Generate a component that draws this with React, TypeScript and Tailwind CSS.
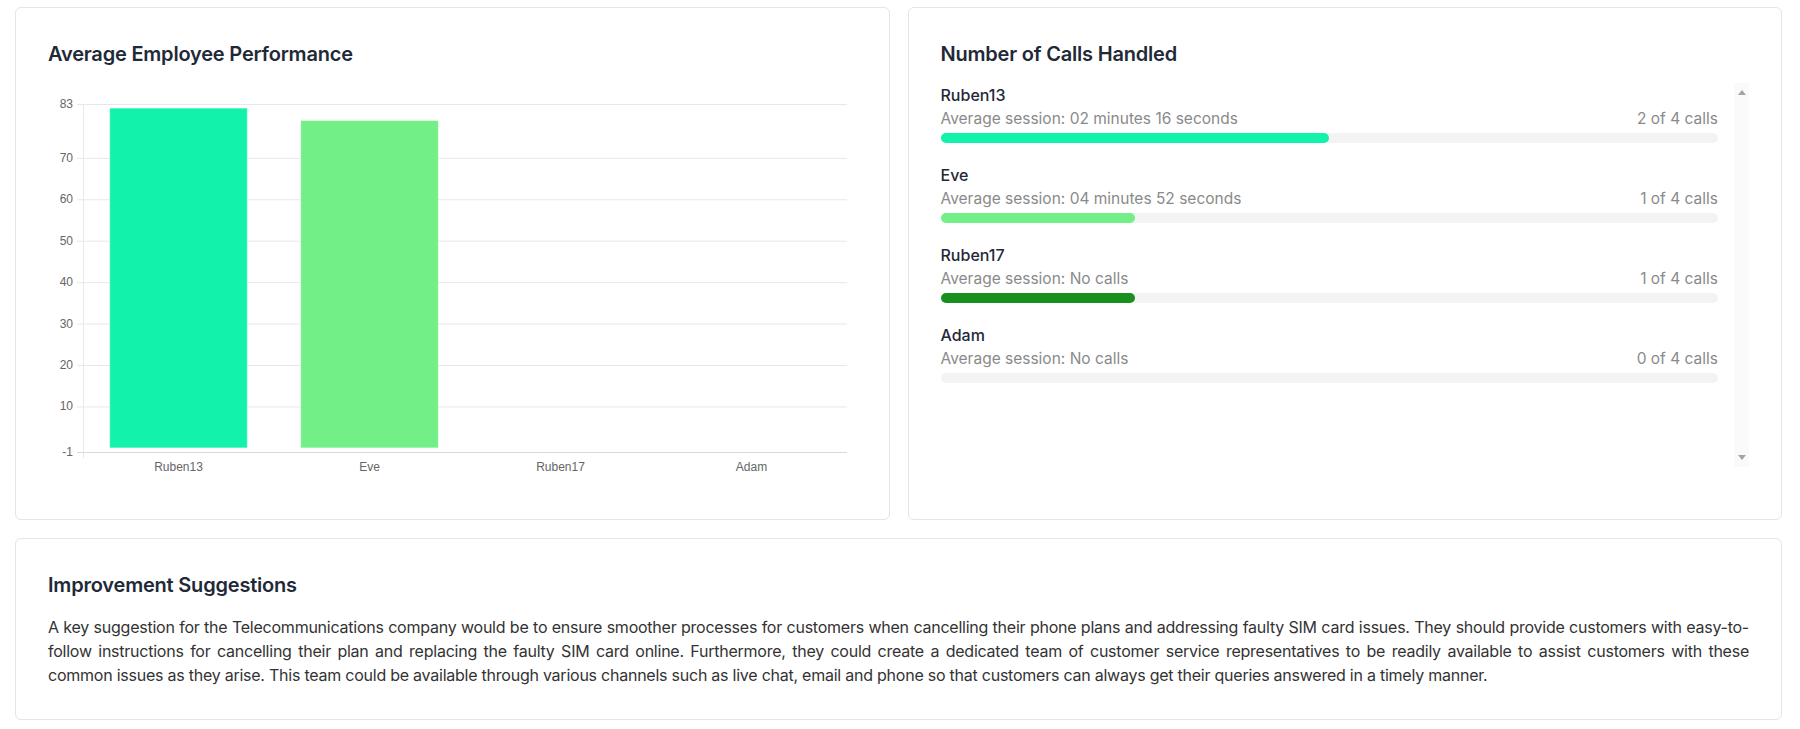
import React from 'react';

const FONT = { fontFamily: 'Inter, "Noto Sans", sans-serif' };

const employees = [
  { name: 'Ruben13', score: 82, session: '02 minutes 16 seconds', calls: 2, color: '#13f2aa' },
  { name: 'Eve', score: 79, session: '04 minutes 52 seconds', calls: 1, color: '#72ef87' },
  { name: 'Ruben17', score: 0, session: 'No calls', calls: 1, color: '#198f1d' },
  { name: 'Adam', score: 0, session: 'No calls', calls: 0, color: '#198f1d' },
];
const TOTAL = 4;

// nbsp keeps "common issues" together so the lines break as in the design
const SUGGESTION =
  'A key suggestion for the Telecommunications company would be to ensure smoother processes for customers when cancelling their phone plans and addressing faulty SIM card issues. They should provide customers with easy-to-follow instructions for cancelling their plan and replacing the faulty SIM card online. Furthermore, they could create a dedicated team of customer service representatives to be readily available to assist customers with these common\u00a0issues as they arise. This team could be available through various channels such as live chat, email and phone so that customers can always get their queries answered in a timely manner.';

function PerformanceChart() {
  const W = 809;
  const H = 399;
  const left = 35;
  const right = 799;
  const top = 16;
  const bottom = 364;
  const yOf = (v: number) => top + ((83 - v) * (bottom - top)) / 84;
  const ticks = [83, 70, 60, 50, 40, 30, 20, 10, -1];
  const cat = (right - left) / employees.length;
  const barW = cat * 0.72;

  return (
    <svg width={W} height={H} viewBox={`0 0 ${W} ${H}`} className="block">
      {ticks.map((t) => (
        <g key={t}>
          <line
            x1={left - 6}
            x2={right}
            y1={yOf(t) + 0.5}
            y2={yOf(t) + 0.5}
            stroke={t === -1 ? '#d9d9d9' : '#e8e8e8'}
            strokeWidth={1}
          />
          <text
            x={left - 10}
            y={yOf(t) + 4}
            textAnchor="end"
            fontSize={12}
            fill="#666"
            fontFamily='"Liberation Sans", Arial, sans-serif'
          >
            {t}
          </text>
        </g>
      ))}
      <line x1={left + 0.5} x2={left + 0.5} y1={top} y2={bottom + 6} stroke="#e8e8e8" />
      {employees.map((e, i) => {
        const cx = left + cat * i + cat / 2;
        const y0 = yOf(0);
        const y1 = yOf(e.score);
        return (
          <g key={e.name}>
            {e.score > 0 && (
              <rect
                x={cx - barW / 2}
                y={y1}
                width={barW}
                height={y0 - y1}
                fill={e.color}
                stroke="#ffffff"
                strokeOpacity={0.35}
                strokeWidth={1}
              />
            )}
            <text
              x={cx}
              y={383}
              textAnchor="middle"
              fontSize={12}
              fill="#666"
              fontFamily='"Liberation Sans", Arial, sans-serif'
            >
              {e.name}
            </text>
          </g>
        );
      })}
    </svg>
  );
}

function CallsList() {
  return (
    <div className="mt-[15px] flex h-[384px]">
      <div className="flex-1 pt-[2px] pr-4">
        {employees.map((e) => (
          <div key={e.name} className="mb-[22px]">
            <p className="text-base leading-5 font-medium text-[#1f2937]">{e.name}</p>
            <div className="flex justify-between text-[15.5px] leading-7 text-[#8a8a8a]">
              <span>Average session: {e.session}</span>
              <span>
                {e.calls} of {TOTAL} calls
              </span>
            </div>
            <div className="h-[10px] w-full rounded-full bg-[#f3f3f3]">
              <div
                className="h-full rounded-full"
                style={{ width: `${(e.calls / TOTAL) * 100}%`, backgroundColor: e.color }}
              />
            </div>
          </div>
        ))}
      </div>
      {/* scrollbar track */}
      <div className="flex w-[15px] flex-col items-center justify-between bg-[#fafafa] py-[7px]">
        <svg width="8" height="5" viewBox="0 0 8 5">
          <path d="M4 0L8 5H0z" fill="#a3a3a3" />
        </svg>
        <svg width="8" height="5" viewBox="0 0 8 5">
          <path d="M0 0h8L4 5z" fill="#a3a3a3" />
        </svg>
      </div>
    </div>
  );
}

export default function App() {
  return (
    <div className="min-h-screen bg-white pt-[7px] pl-[15px] pr-[18px]" style={FONT}>
      <div className="grid grid-cols-2 gap-[18px]">
        <section className="h-[513px] rounded-md border border-[#e5e5e5] bg-white p-8">
          <h2 className="text-xl leading-7 font-semibold tracking-[-0.01em] text-[#1f2937]">
            Average Employee Performance
          </h2>
          <div className="mt-5">
            <PerformanceChart />
          </div>
        </section>
        <section className="h-[513px] rounded-md border border-[#e5e5e5] bg-white p-8 pr-[32px]">
          <h2 className="text-xl leading-7 font-semibold tracking-[-0.01em] text-[#1f2937]">
            Number of Calls Handled
          </h2>
          <CallsList />
        </section>
      </div>
      <section className="mt-[18px] rounded-md border border-[#e5e5e5] bg-white p-8">
        <h2 className="text-xl leading-7 font-semibold tracking-[-0.01em] text-[#1f2937]">Improvement Suggestions</h2>
        <p className="mt-4 text-justify text-base leading-6 tracking-[-0.015em] text-[#333]">{SUGGESTION}</p>
      </section>
    </div>
  );
}
